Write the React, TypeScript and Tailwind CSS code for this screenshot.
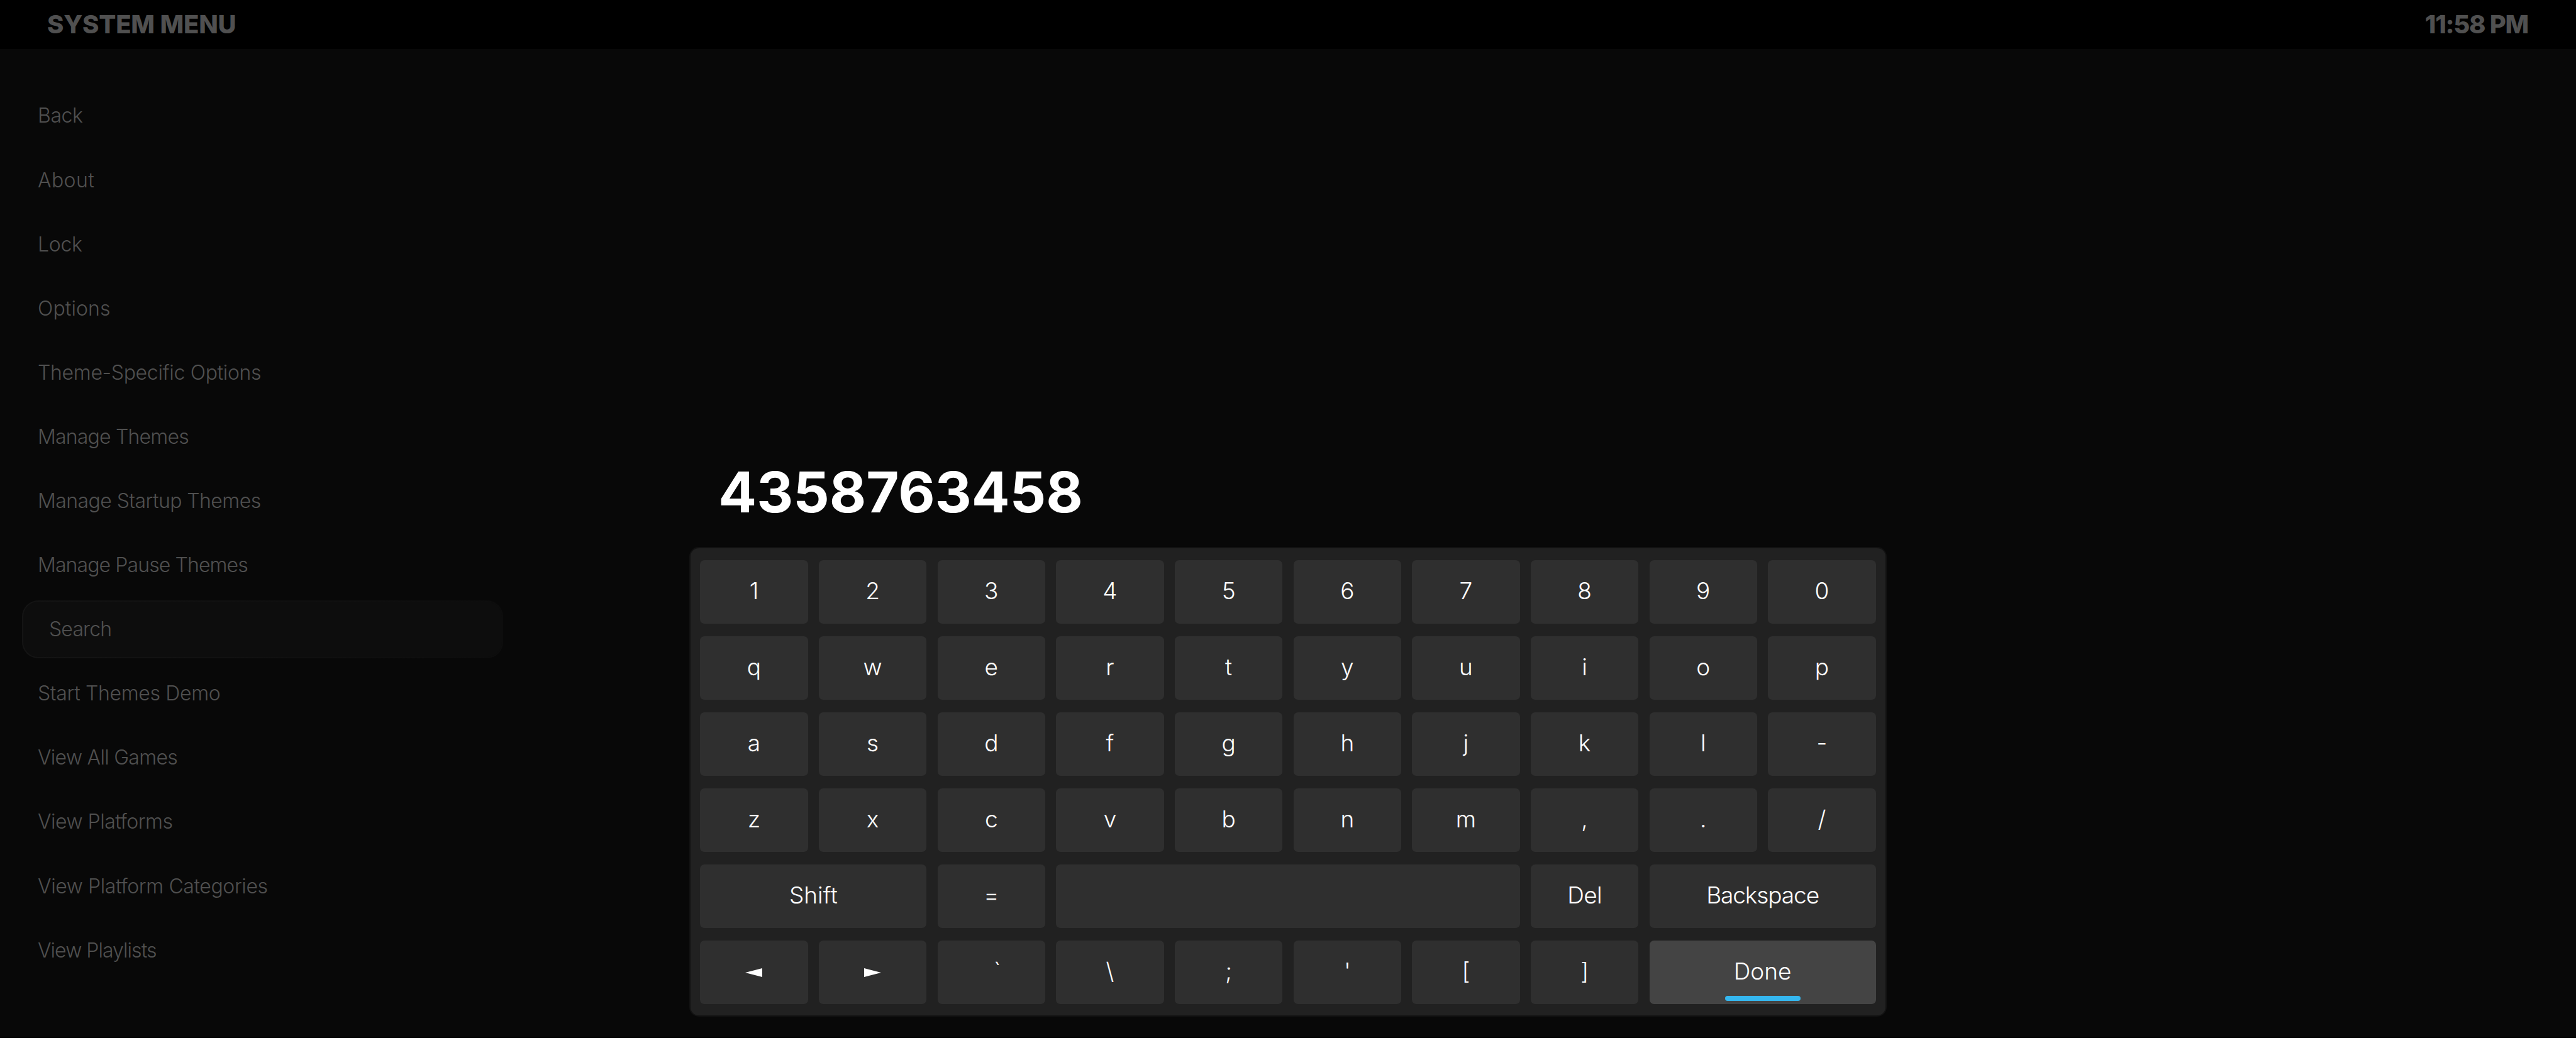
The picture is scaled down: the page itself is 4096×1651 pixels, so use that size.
const menuItems = [
  { label: 'Back', tracking: 'tracking-[-0.4px]' },
  { label: 'About', tracking: 'tracking-[0.4px]' },
  { label: 'Lock', tracking: 'tracking-[-0.3px]' },
  { label: 'Options', tracking: 'tracking-[0.1px]' },
  { label: 'Theme-Specific Options', tracking: 'tracking-[-0.32px]' },
  { label: 'Manage Themes', tracking: 'tracking-[-0.8px]' },
  { label: 'Manage Startup Themes', tracking: 'tracking-[-0.57px]' },
  { label: 'Manage Pause Themes', tracking: 'tracking-[-0.9px]' },
  { label: 'Search', tracking: 'tracking-[-0.85px]' },
  { label: 'Start Themes Demo', tracking: 'tracking-[-0.35px]' },
  { label: 'View All Games', tracking: 'tracking-[-0.7px]' },
  { label: 'View Platforms', tracking: 'tracking-[-0.5px]' },
  { label: 'View Platform Categories', tracking: 'tracking-[-0.4px]' },
  { label: 'View Playlists', tracking: 'tracking-[-0.95px]' },
];

const keys = [
  ...'1234567890qwertyuiopasdfghjkl-zxcvbnm,./',
  'Shift', '=', ' ', 'Del', 'Backspace',
  'left', 'right', '`', '\\', ';', "'", '[', ']', 'Done',
];

const spans: Record<string, string> = {
  Shift: 'col-span-2',
  ' ': 'col-span-4',
  Backspace: 'col-span-2 tracking-[-1.1px]',
  Del: 'tracking-[-0.6px]',
  '`': 'pl-[19px]',
  Done: 'col-span-2',
};

function Arrow({ flip }: { flip?: boolean }) {
  return (
    <svg className="w-[27px] h-[14px]" viewBox="0 0 27 14" preserveAspectRatio="none">
      <path d={flip ? 'M0 0 L27 7 L0 14 Z' : 'M27 0 L0 7 L27 14 Z'} fill="#fff" />
    </svg>
  );
}

function Key({ value }: { value: string }) {
  const done = value === 'Done';
  return (
    <button
      className={`relative flex items-center justify-center rounded-[7px] text-white ${
        done ? 'bg-[#444444]' : 'bg-[#2f2f2f]'
      } ${spans[value] ?? ''}`}
    >
      {value === 'left' && <Arrow />}
      {value === 'right' && <Arrow flip />}
      {value !== 'left' && value !== 'right' && <span className="pb-[3px]">{value}</span>}
      {done && (
        <span className="absolute bottom-[5px] left-1/2 -translate-x-1/2 w-[120px] h-[8px] rounded-full bg-[#35b7ef]" />
      )}
    </button>
  );
}

export default function App() {
  return (
    <div className="w-[4096px] h-[1651px] overflow-hidden flex flex-col bg-[#080808] border-b-2 border-black font-['Inter',sans-serif]">
      <header className="h-[78.4px] shrink-0 bg-black flex items-center justify-between pl-[75px] pr-[76px] text-[40px] font-extrabold text-[#505050]">
        <span className="tracking-[-0.2px]">SYSTEM MENU</span>
        <span className="tracking-[-1.3px]">11:58 PM</span>
      </header>

      <div className="flex flex-1">
        <nav className="w-[1096.3px] shrink-0 pt-[55px] pl-[35px] text-[32px] font-light text-[#505050]">
          {menuItems.map((item) => (
            <div key={item.label} className="h-[102.1px] flex items-center">
              {item.label === 'Search' ? (
                <div className="w-[765px] h-[91.5px] rounded-[26px] p-[2px] bg-linear-to-r from-[#141414] to-[#0d0d0d]">
                  <div className="h-full rounded-[24px] bg-[#0d0d0d] flex items-center pl-[41px]">
                    <span className={item.tracking}>{item.label}</span>
                  </div>
                </div>
              ) : (
                <span className={`pl-[25px] ${item.tracking}`}>{item.label}</span>
              )}
            </div>
          ))}
        </nav>

        <main className="w-[1903.3px] shrink-0 flex flex-col">
          <div className="h-[792px] flex items-end pl-[46px] pb-[37px]">
            <span className="text-[90px] leading-[100px] font-bold text-white">4358763458</span>
          </div>
          {/* on-screen keyboard */}
          <div className="h-[746.6px] rounded-[15px] border-2 border-[#121212] bg-[#212121] px-[15px] pt-[18.3px] pb-[18px] grid grid-cols-10 grid-rows-6 gap-x-[17.3px] gap-y-[20.2px] text-[37px] font-light">
            {keys.map((k) => (
              <Key key={k} value={k} />
            ))}
          </div>
        </main>
      </div>
    </div>
  );
}
